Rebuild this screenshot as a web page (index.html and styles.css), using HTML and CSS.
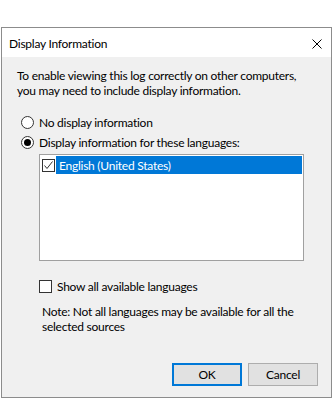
FILE: index.html
```html
<!DOCTYPE html>
<html lang="en">
<head>
    <meta charset="UTF-8">
    <title>Display Information</title>
    <link rel="stylesheet" href="styles.css">
</head>
<body>
<div class="window">
    <div class="titlebar">
        <span class="title">Display Information</span>
        <svg class="close" width="10" height="10" viewBox="0 0 10 10">
            <path d="M0.5 0.5 L9.5 9.5 M9.5 0.5 L0.5 9.5" stroke="#000" stroke-width="1" fill="none"/>
        </svg>
    </div>
    <div class="content">
        <p class="intro">To enable viewing this log correctly on other computers,<br>you may need to include display information.</p>
        <div class="options">
            <label class="radio"><span class="radio-circle"></span>No display information</label>
            <label class="radio"><span class="radio-circle checked"></span>Display information for these languages:</label>
        </div>
        <div class="listbox">
            <div class="item">
                <span class="box">
                    <svg width="11" height="11" viewBox="0 0 11 11">
                        <path d="M1.5 5.5 L4 8.5 L9.5 1.5" stroke="#333" stroke-width="1" fill="none"/>
                    </svg>
                </span>
                <span class="item-text">English (United States)</span>
            </div>
        </div>
        <label class="checkbox"><span class="box"></span>Show all available languages</label>
        <p class="note">Note: Not all languages may be available for all the<br>selected sources</p>
        <div class="buttons">
            <button class="btn default">OK</button>
            <button class="btn">Cancel</button>
        </div>
    </div>
</div>
</body>
</html>
```

FILE: styles.css
```css
body {
    margin: 0;
    background-color: #ffffff;
    font-family: Lato, "Noto Sans", sans-serif;
    font-size: 12px;
    letter-spacing: -0.25px;
    color: #000000;
    white-space: nowrap;
}
.window {
    margin: 27px 0 0 1px;
    width: 331px;
    height: 371px;
    box-sizing: border-box;
    border: 1px solid #8c8c8c;
    background-color: #f0f0f0;
    display: flex;
    flex-direction: column;
}
.titlebar {
    height: 29px;
    background-color: #ffffff;
    display: flex;
    align-items: center;
    justify-content: space-between;
    padding: 0 9px 0 7px;
}
.title {
    padding-top: 1px;
}
.close {
    margin-top: 2px;
}
.content {
    flex: 1;
    display: flex;
    flex-direction: column;
    padding: 0 13px 11px 14px;
}
.intro {
    margin: 11px 0 0 1px;
    line-height: 15px;
}
.options {
    margin-top: 14px;
    display: flex;
    flex-direction: column;
}
.radio {
    height: 20px;
    display: flex;
    align-items: center;
    margin-left: 5px;
}
.radio-circle {
    width: 13px;
    height: 13px;
    box-sizing: border-box;
    border: 1px solid #333333;
    border-radius: 50%;
    background-color: #ffffff;
    margin-right: 5px;
    display: flex;
    align-items: center;
    justify-content: center;
}
.radio-circle.checked::after {
    content: "";
    width: 7px;
    height: 7px;
    border-radius: 50%;
    background-color: #000000;
}
.listbox {
    margin: 2px 0 0 23px;
    width: 265px;
    height: 107px;
    box-sizing: border-box;
    border: 1px solid #a0a0a0;
    background-color: #ffffff;
    padding: 1px 1px 0 2px;
}
.item {
    height: 18px;
    display: flex;
    align-items: center;
}
.box {
    width: 13px;
    height: 13px;
    box-sizing: border-box;
    border: 1px solid #333333;
    background-color: #ffffff;
    display: flex;
    align-items: center;
    justify-content: center;
    flex-shrink: 0;
}
.item-text {
    flex: 1;
    height: 100%;
    margin-left: 1px;
    padding-left: 3px;
    background-color: #0078d7;
    color: #ffffff;
    display: flex;
    align-items: center;
}
.checkbox {
    margin: 17px 0 0 23px;
    height: 16px;
    display: flex;
    align-items: center;
}
.checkbox .box {
    margin-right: 5px;
}
.note {
    margin: 10px 0 0 26px;
    line-height: 15px;
}
.buttons {
    margin-top: auto;
    display: flex;
    justify-content: flex-end;
    gap: 6px;
}
.btn {
    width: 70px;
    height: 23px;
    box-sizing: border-box;
    border: 1px solid #adadad;
    background-color: #e1e1e1;
    font-family: inherit;
    font-size: 12px;
    letter-spacing: -0.25px;
    color: #000000;
    padding: 0;
}
.btn.default {
    border: 2px solid #0078d7;
}
```
